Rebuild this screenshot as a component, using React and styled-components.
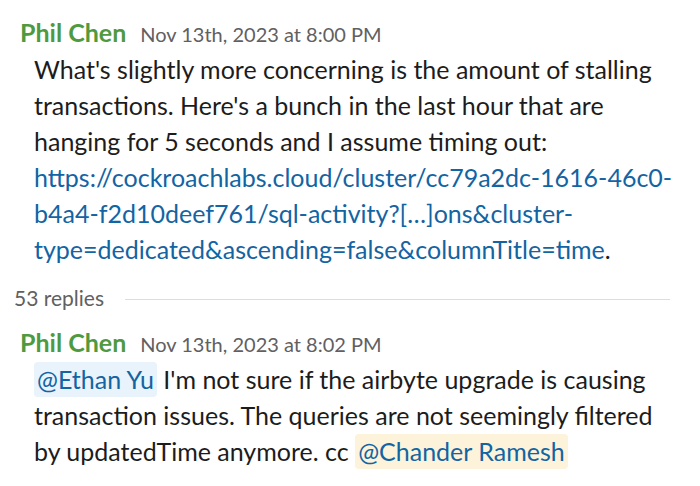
import React from "react";
import styled, { createGlobalStyle } from "styled-components";

const Global = createGlobalStyle`
  html, body { margin: 0; padding: 0; background: #ffffff; }
  body { font-family: Lato, "Noto Sans", sans-serif; color: #1d1c1d; -webkit-font-smoothing: antialiased; }
`;

const Page = styled.div`
  width: 700px;
  height: 486px;
  overflow: hidden;
  padding: 17px 0 0 0;
  box-sizing: border-box;
`;

const Message = styled.div`
  padding-left: 20px;
  padding-right: 18px;
`;

const Header = styled.div`
  display: flex;
  align-items: baseline;
  gap: 14px;
  height: 34px;
`;

const Name = styled.span`
  font-weight: 700;
  font-size: 25px;
  color: #4f9a41;
`;

const Time = styled.span`
  font-size: 20px;
  color: #616061;
`;

const Body = styled.div`
  padding-left: 14px;
  font-size: 25px;
  line-height: 36px;
  color: #1d1c1d;
`;

const Link = styled.a`
  color: #1264a3;
  text-decoration: none;
`;

const Mention = styled.span`
  color: #1264a3;
  background: ${(p) => (p.$me ? "#fdf3db" : "#e8f3fc")};
  border-radius: 4px;
  padding: 2px 3px 3px;
`;

const Replies = styled.div`
  display: flex;
  align-items: center;
  gap: 21px;
  padding-left: 14px;
  padding-right: 30px;
  height: 60px;
  font-size: 21px;
  color: #616061;
`;

const Rule = styled.div`
  flex: 1;
  height: 1px;
  margin-top: 4px;
  background: #dddddd;
`;

export default function App() {
  return (
    <Page>
      <Global />
      <Message>
        <Header>
          <Name>Phil Chen</Name>
          <Time>Nov 13th, 2023 at 8:00 PM</Time>
        </Header>
        <Body>
          What's slightly more concerning is the amount of stalling transactions. Here's a bunch in the last hour that are hanging for 5 seconds and I assume timing out:{" "}
          <Link href="#">
            https://cockroachlabs.cloud/cluster/cc79a2dc-1616-46c0-b4a4-f2d10deef761/sql-activity?[…]ons&amp;cluster-type=dedicated&amp;ascending=false&amp;columnTitle=time
          </Link>
          .
        </Body>
      </Message>
      <Replies>
        <span>53 replies</span>
        <Rule />
      </Replies>
      <Message>
        <Header>
          <Name>Phil Chen</Name>
          <Time>Nov 13th, 2023 at 8:02 PM</Time>
        </Header>
        <Body>
          <Mention>@Ethan Yu</Mention> I'm not sure if the airbyte upgrade is causing transaction issues. The queries are not seemingly filtered by updatedTime anymore. cc <Mention $me>@Chander Ramesh</Mention>
        </Body>
      </Message>
    </Page>
  );
}
